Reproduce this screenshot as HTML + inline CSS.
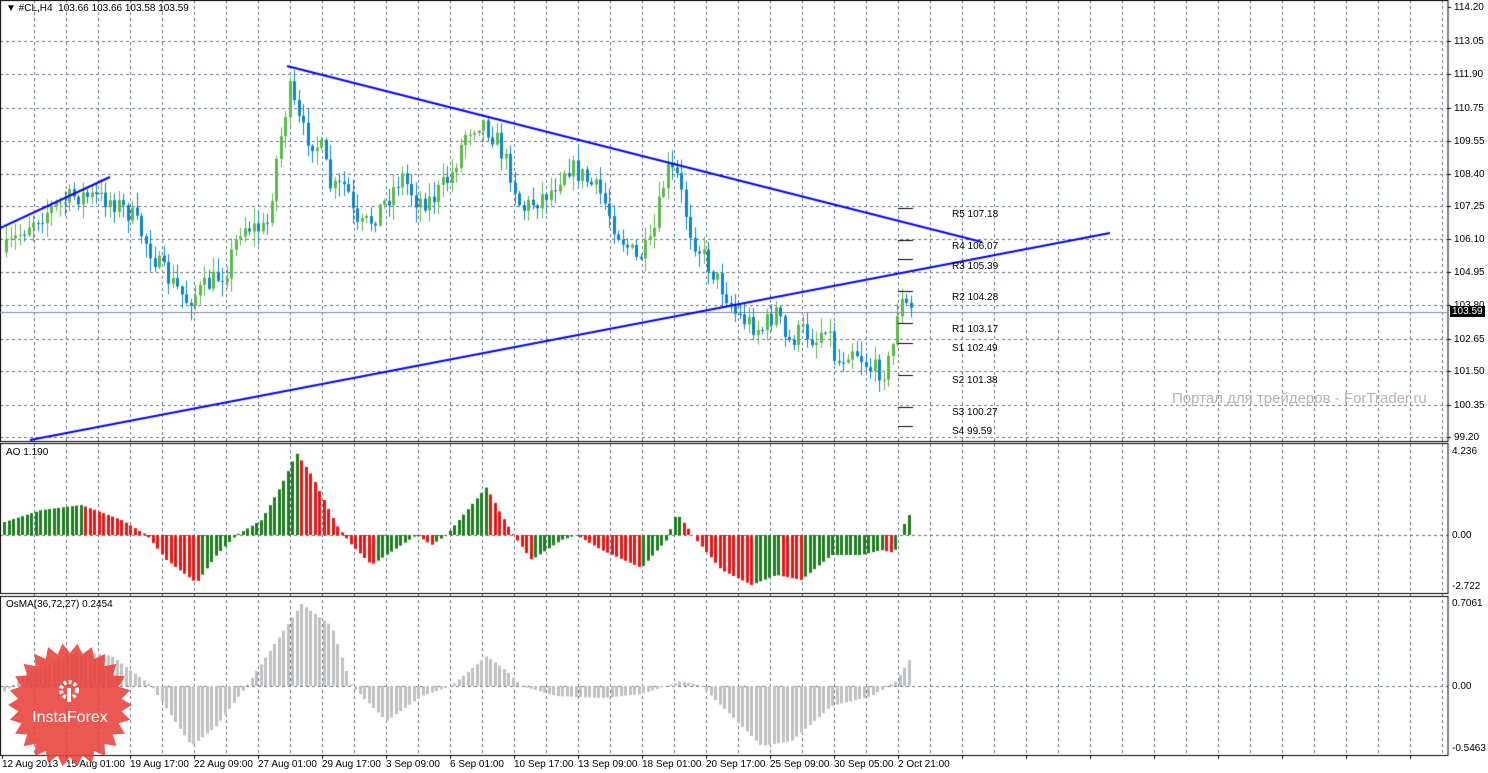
<!DOCTYPE html>
<html><head><meta charset="utf-8"><style>
body{margin:0;width:1488px;height:773px;overflow:hidden;background:#fff;font-family:"Liberation Sans",sans-serif;font-size:10px;color:#000}
canvas{position:absolute;left:0;top:0}
.t{position:absolute;font-size:10px;line-height:11px;white-space:nowrap}
</style></head><body>
<canvas id="c" width="1488" height="773"></canvas>
<div id="lbl"></div>
<div class="t" style="left:6px;top:3px">&#9660; #CL,H4 &nbsp;103.66 103.66 103.58 103.59</div>
<div class="t" style="left:6px;top:447px">AO 1.190</div>
<div class="t" style="left:6px;top:599px">OsMA(36,72,27) 0.2454</div>
<div class="t" style="left:1172px;top:390px;font-size:15px;line-height:17px;color:#bcb0b0">Портал для трейдеров - ForTrader.ru</div>
<svg style="position:absolute;left:0;top:0" width="1488" height="773">
<polygon id="star" fill="#e8403a" fill-opacity="0.88"/>
<g fill="#fff" transform="translate(69,690)">
<circle cx="0" cy="0" r="8" fill="none" stroke="#fff" stroke-width="4" stroke-dasharray="3 2.3"/>
<rect x="-2" y="-2" width="4" height="14"/>
</g>
<text x="70" y="722" fill="#fff" font-family="Liberation Sans" font-size="16" text-anchor="middle">InstaForex</text>
</svg>
<script>
var c=document.getElementById('c').getContext('2d');
var R=1448;
function lerpKP(kp,x){for(var i=0;i<kp.length-1;i++){if(x<=kp[i+1][0]){var a=kp[i],b=kp[i+1],t=(x-a[0])/(b[0]-a[0]);return a[1]+(b[1]-a[1])*t;}}return kp[kp.length-1][1];}
var s=7;function rnd(){s=(s*16807)%2147483647;return s/2147483647;}
c.strokeStyle='#627283';c.lineWidth=1;c.setLineDash([3,3]);
for(var x=34;x<R;x+=32){c.beginPath();c.moveTo(x+.5,0);c.lineTo(x+.5,755);c.stroke();}
var prices=['114.20','113.05','111.90','110.75','109.55','108.40','107.25','106.10','104.95','103.80','102.65','101.50','100.35','99.20'];
var py=[7,41,74,108,141,174,206,239,272,305,339,371,405,437];
for(var i=1;i<py.length;i++){c.beginPath();c.moveTo(0,py[i]+.5);c.lineTo(R,py[i]+.5);c.stroke();}
[535,686].forEach(function(y){c.beginPath();c.moveTo(0,y+.5);c.lineTo(R,y+.5);c.stroke();});
c.setLineDash([]);
c.strokeStyle='#000';
[[0.5,0.5,R,441],[0.5,443.5,R,150],[0.5,596.5,R,159]].forEach(function(r){c.strokeRect(r[0],r[1],r[2]-0.5,r[3]);});
c.strokeStyle='#7a8ca0';c.beginPath();c.moveTo(0,312.5);c.lineTo(R,312.5);c.stroke();
var kp=[[5,250],[30,220],[75,195],[110,200],[130,215],[160,270],[185,300],[200,290],[225,270],[240,225],[265,230],[275,160],[288,90],[300,130],[320,150],[330,190],[345,185],[355,230],[370,220],[385,200],[400,175],[415,200],[430,200],[450,175],[465,130],[480,120],[495,140],[510,175],[520,210],[535,200],[550,190],[565,165],[580,175],[600,195],[615,230],[635,260],[650,245],[665,170],[675,175],[690,235],[710,270],[725,295],[735,315],[760,330],[775,310],[785,345],[800,330],[815,340],[825,320],[835,365],[850,345],[870,370],[885,370],[893,340],[897,300],[910,311]];
var prev=lerpKP(kp,3);
for(var x=5;x<=910;x+=4.5){var cl=lerpKP(kp,x)+(rnd()-.5)*22;var op=prev;var up=cl<op;
var hi=Math.min(op,cl)-rnd()*14-1,lo=Math.max(op,cl)+rnd()*14+1;var xi=Math.round(x);
c.fillStyle=up?'#5cb84a':'#0b84c8';c.fillRect(xi+1,hi,1,lo-hi);c.fillRect(xi,Math.min(op,cl),3,Math.max(1,Math.abs(cl-op)));prev=cl;}
c.strokeStyle='#0000ff';c.lineWidth=2;
[[0,228,110,177],[287,66,982,242],[30,440,1110,233]].forEach(function(l){c.beginPath();c.moveTo(l[0],l[1]);c.lineTo(l[2],l[3]);c.stroke();});
c.lineWidth=1;
c.strokeStyle='#000';
[208,240,259,291,323,343,375,407,426].forEach(function(y){c.beginPath();c.moveTo(898,y+.5);c.lineTo(913,y+.5);c.stroke();});
var ak=[[0,12],[40,25],[80,30],[120,15],[145,0],[165,-25],[195,-48],[215,-20],[235,0],[260,15],[280,50],[295,82],[310,60],[335,10],[350,-10],[370,-30],[400,-10],[415,0],[430,-10],[445,0],[470,30],[485,48],[500,20],[512,0],[530,-25],[560,-5],[575,0],[600,-15],[640,-33],[665,-5],[675,22],[688,5],[695,-5],[720,-35],[750,-50],[775,-40],[800,-45],[830,-20],[860,-20],[880,-15],[893,-18],[900,5],[910,25]];
var pv=0;
for(var x=3;x<=910;x+=4.5){var v=lerpKP(ak,x);c.fillStyle=v>=pv?'#1e7d1e':'#e01818';var xi=Math.round(x);if(v>0)c.fillRect(xi,535-v,3,v);else c.fillRect(xi,535,3,-v);pv=v;}
var ok=[[0,-8],[30,15],[80,35],[110,30],[150,0],[190,-60],[215,-40],[245,0],[265,30],[300,82],[330,60],[350,0],[385,-35],[420,-10],[450,0],[485,30],[505,15],[520,0],[555,-10],[600,-12],[640,-8],[680,5],[700,0],[730,-30],[760,-60],[790,-55],[830,-20],[870,-10],[895,5],[910,30]];
c.fillStyle='#c0c0c0';
for(var x=3;x<=910;x+=4.5){var v=lerpKP(ok,x);var xi=Math.round(x);if(v>0)c.fillRect(xi,686-v,3,v);else c.fillRect(xi,686,3,-v);}
var h='';
prices.forEach(function(p,i){h+='<div class="t" style="left:1454px;top:'+(py[i]-5)+'px">'+p+'</div>';});
[[4.236,451],['0.00',535],['-2.722',586],['0.7061',603],['0.00',686],['-0.5463',748]].forEach(function(a){h+='<div class="t" style="left:1452px;top:'+(a[1]-5)+'px">'+a[0]+'</div>';});
h+='<div class="t" style="left:1450px;top:306px;background:#000;color:#fff;padding:0 2px">103.59</div>';
[['R5 107.18',214],['R4 106.07',246],['R3 105.39',266],['R2 104.28',297],['R1 103.17',329],['S1 102.49',348],['S2 101.38',380],['S3 100.27',412],['S4 99.59',431]].forEach(function(a){h+='<div class="t" style="left:952px;top:'+(a[1]-5)+'px">'+a[0]+'</div>';});
var d=['12 Aug 2013','15 Aug 01:00','19 Aug 17:00','22 Aug 09:00','27 Aug 01:00','29 Aug 17:00','3 Sep 09:00','6 Sep 01:00','10 Sep 17:00','13 Sep 09:00','18 Sep 01:00','20 Sep 17:00','25 Sep 09:00','30 Sep 05:00','2 Oct 21:00'];
d.forEach(function(t,i){h+='<div class="t" style="left:'+(2+64*i)+'px;top:759px">'+t+'</div>';});
document.getElementById('lbl').innerHTML=h;
c.fillStyle='#000';for(var x=2;x<R;x+=64)c.fillRect(x,755,1,4);
for(var i=0;i<py.length;i++)c.fillRect(R,py[i],3,1);
var pts=[],n=26,cx=70,cy=705;for(var i=0;i<2*n;i++){var r=i%2?52:62,a=Math.PI*i/n;pts.push((cx+r*Math.cos(a)).toFixed(1)+','+(cy+r*Math.sin(a)).toFixed(1));}
document.getElementById('star').setAttribute('points',pts.join(' '));
</script>
</body></html>
